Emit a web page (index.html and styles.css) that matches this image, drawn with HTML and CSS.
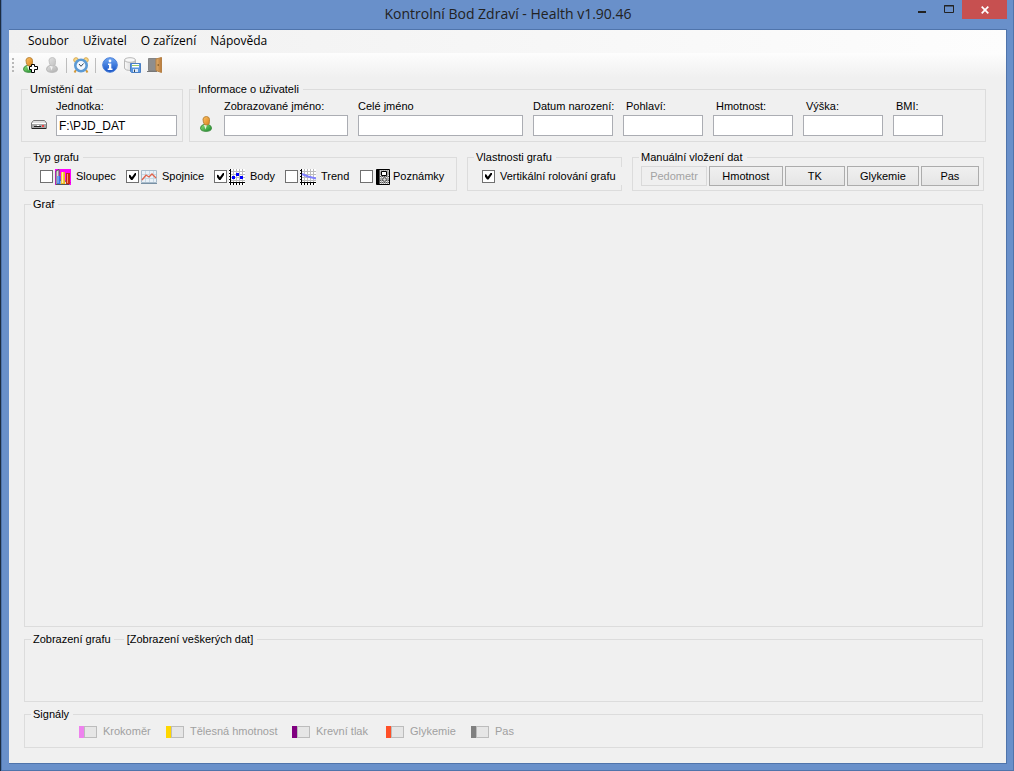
FILE: index.html
```
<!DOCTYPE html>
<html lang="cs">
<head>
<meta charset="utf-8">
<title>Kontrolní Bod Zdraví - Health v1.90.46</title>
<link rel="stylesheet" href="styles.css">
</head>
<body>
<svg class="defs" width="0" height="0" aria-hidden="true">
  <defs>
    <linearGradient id="gold" x1="0" y1="0" x2="1" y2="1"><stop offset="0" stop-color="#ffc060"/><stop offset="1" stop-color="#d88420"/></linearGradient>
    <linearGradient id="green" x1="0" y1="0" x2="1" y2="1"><stop offset="0" stop-color="#8fe07a"/><stop offset="1" stop-color="#178a2c"/></linearGradient>
    <linearGradient id="blue" x1="0" y1="0" x2="0" y2="1"><stop offset="0" stop-color="#6fa8f5"/><stop offset="1" stop-color="#1450c4"/></linearGradient>
    <linearGradient id="steel" x1="0" y1="0" x2="1" y2="0"><stop offset="0" stop-color="#fafafa"/><stop offset="1" stop-color="#c8c8c8"/></linearGradient>
    <linearGradient id="wood" x1="0" y1="0" x2="1" y2="0"><stop offset="0" stop-color="#e0b070"/><stop offset="1" stop-color="#b87838"/></linearGradient>
    <symbol id="person" viewBox="0 0 16 16">
      <path d="M2.500 12.500Q2.500 9.500 5.500 8.500H10.500Q13.500 9.500 13.500 12.500Q13 15.300 8 15.300Q3 15.300 2.500 12.500Z" fill="url(#green)" stroke="#3c8a3c"/>
      <path d="M6 9L7.500 13.500L9 9Z" fill="#e8f4e0"/>
      <path d="M5 3Q5.500 .5 8.500 .5Q11.500 .8 11.500 3.500Q11.500 6 11 8Q9 9.800 6.500 8.500Q5 6 5 3Z" fill="url(#gold)" stroke="#b9853a"/>
    </symbol>
    <symbol id="grid" viewBox="0 0 16 16">
      <path d="M0 0H16V16H0Z" fill="#fff"/>
      <path d="M4.500 0V14M7.500 0V14M10.500 0V14M13.500 0V14M2 2.500H16M2 5.500H16M2 8.500H16M2 11.500H16" stroke="#bcbcbc"/>
      <path d="M1.500 0V16M0 13.500H16M0 1.500H1M0 4.500H1M0 7.500H1M0 10.500H1M4.500 14V16M7.500 14V16M10.500 14V16M13.500 14V16" stroke="#000"/>
    </symbol>
  </defs>
</svg>
<div class="window">
  <header class="titlebar">
    <h1 class="title">Kontrolní Bod Zdraví - Health v1.90.46</h1>
    <div class="controls">
      <button class="ctl" type="button" aria-label="Minimalizovat"><svg width="8" height="14"><path d="M0 11H8V13H0Z" fill="#222"/></svg></button>
      <button class="ctl" type="button" aria-label="Maximalizovat"><svg width="10" height="14"><path d="M.5 5.500H9.500V12.500H.5ZM0 6H10" fill="none" stroke="#222"/></svg></button>
      <button class="ctl close" type="button" aria-label="Zavřít"><svg width="8" height="8"><path d="M.7 .7L7.300 7.300M7.300 .7L.7 7.300" stroke="#fff" stroke-width="1.700"/></svg></button>
    </div>
  </header>
  <div class="client">
    <nav class="menu">
      <button type="button">Soubor</button><button type="button">Uživatel</button><button type="button">O zařízení</button><button type="button">Nápověda</button>
    </nav>
    <div class="toolbar" role="toolbar">
      <span class="grip"></span>
      <button type="button" aria-label="Přidat uživatele"><svg width="16" height="16"><svg x="-1" width="16" height="16"><use href="#person"/></svg><path d="M9.500 7.500H12.500V9.500H15.500V12.500H12.500V15.500H9.500V12.500H7.500V9.500H9.500Z" fill="#fff" stroke="#000"/></svg></button>
      <button type="button" aria-label="Uživatel" disabled><svg class="gray" width="16" height="16"><use href="#person"/></svg></button>
      <span class="sep"></span>
      <button type="button" aria-label="Budík"><svg width="16" height="16"><path d="M3 13L1.500 15.500M13 13L14.500 15.500" stroke="#d49a3a" stroke-width="2"/><circle cx="3" cy="3" r="2.300" fill="#f8d88a" stroke="#d9aa50"/><circle cx="13" cy="3" r="2.300" fill="#f8d88a" stroke="#d9aa50"/><circle cx="8" cy="8.500" r="5.700" fill="#f4f9ff" stroke="#5c9ad4" stroke-width="2.600"/><path d="M6 7L8 9.300L10.500 6.500" fill="none" stroke="#345"/></svg></button>
      <span class="sep"></span>
      <button type="button" aria-label="Informace"><svg width="16" height="16"><circle cx="8" cy="8" r="7.300" fill="url(#blue)" stroke="#4a7fd8"/><circle cx="8" cy="4" r="1.400" fill="#fff"/><path d="M6 6.500H9.300V11.500H10.500V13H5.700V11.500H7V8H6Z" fill="#fff"/></svg></button>
      <button type="button" aria-label="Uložit data"><svg width="17" height="16"><path d="M.5 3V11Q1 13.500 7 13.500H11.500V3" fill="url(#steel)" stroke="#b8b8b8"/><ellipse cx="6" cy="3" rx="5.500" ry="2.300" fill="#f8f8f8" stroke="#b8b8b8"/><path d="M6.500 6.500H16.500V15.500H7.500L6.500 14.500Z" fill="#5a96e0" stroke="#4a7fc4"/><path d="M8 7H15V10.500H8Z" fill="#fff"/><path d="M8 8.500H15" stroke="#9bc96a"/><path d="M9 12H14V15H9Z" fill="#dce8f8"/><path d="M10 12.500H11V15H10Z" fill="#345"/></svg></button>
      <button type="button" aria-label="Konec"><svg width="16" height="16"><path d="M1.500 1.500H9.500V13.500H1.500Z" fill="#8e8e8e" stroke="#858585"/><path d="M0 14.500H10" stroke="#777"/><path d="M9 2L14.500 .5V15.500L9 13.500Z" fill="url(#wood)" stroke="#b58045"/><path d="M10.500 8H12" stroke="#604010"/></svg></button>
    </div>
    <main class="body">
      <div class="row top">
        <fieldset class="group location">
          <legend>Umístění dat</legend>
          <svg class="icon" width="16" height="16"><path d="M2.500 4.500H13.500L15.500 7V12.500H.5V7Z" fill="#e0e0e0" stroke="#777"/><path d="M1 7H15V12H1Z" fill="#a8a8a8"/><path d="M1 7.500H15" stroke="#fff"/><path d="M3 10H10V11H3Z" fill="#222"/><path d="M6 9H8V10H6Z" fill="#fff"/><path d="M11 9H13V11H11Z" fill="#e44"/><path d="M1 12.500H15" stroke="#222"/></svg>
          <div class="field unit"><label for="unit">Jednotka:</label><input id="unit" type="text" value="F:\PJD_DAT"></div>
        </fieldset>
        <fieldset class="group user">
          <legend>Informace o uživateli</legend>
          <svg class="icon" width="16" height="16"><use href="#person"/></svg>
          <div class="field nick"><label for="nick">Zobrazované jméno:</label><input id="nick" type="text"></div>
          <div class="field name"><label for="name">Celé jméno</label><input id="name" type="text"></div>
          <div class="field"><label for="birth">Datum narození:</label><input id="birth" type="text"></div>
          <div class="field inset"><label for="sex">Pohlaví:</label><input id="sex" type="text"></div>
          <div class="field inset"><label for="weight">Hmotnost:</label><input id="weight" type="text"></div>
          <div class="field inset"><label for="height">Výška:</label><input id="height" type="text"></div>
          <div class="field inset bmi"><label for="bmi">BMI:</label><input id="bmi" type="text"></div>
        </fieldset>
      </div>
      <div class="row options">
        <fieldset class="group types">
          <legend>Typ grafu</legend>
          <label class="check"><input type="checkbox"><svg width="16" height="16"><path d="M0 0H16V16H0Z" fill="#f0f"/><path d="M1 2L4 .5V11L15 13L14 15.500H1Z" fill="#ddd" stroke="#555"/><path d="M2 7H5.500V15H2Z" fill="#3a76e0"/><path d="M3 7V14" stroke="#a8c8ff"/><path d="M6 3H10V15H6Z" fill="#f0b820"/><path d="M7.500 3V14" stroke="#fff0a0" stroke-width="1.500"/><path d="M11 4H15V15H11Z" fill="#c82818"/><path d="M12.500 5V14" stroke="#ff9070"/></svg><span>Sloupec</span></label>
          <label class="check"><input type="checkbox" checked><svg width="16" height="16"><path d="M.5 1.500H15.500V13.500H.5Z" fill="#e9f1f8" stroke="#a9bccb"/><path d="M4.500 2V13M8.500 2V13M12.500 2V13M1 5.500H15M1 9.500H15" stroke="#c8d8e4"/><path d="M0 14.500H16" stroke="#7890a4"/><path d="M1 11L5 6L8 8L11 5L15 9" fill="none" stroke="#e0634a" stroke-width="1.300"/></svg><span>Spojnice</span></label>
          <label class="check"><input type="checkbox" checked><svg width="16" height="16"><use href="#grid"/><path d="M3 7H6V10H3ZM7 4H10V7H7ZM11 7H14V10H11Z" fill="#00f"/></svg><span>Body</span></label>
          <label class="check"><input type="checkbox"><svg width="16" height="16"><use href="#grid"/><path d="M2 5L8 7.500L16 9.500" fill="none" stroke="#8080ff" stroke-width="2"/></svg><span>Trend</span></label>
          <label class="check notes"><input type="checkbox"><svg width="16" height="16"><path d="M1.500 .5H14.500V15.500H1.500Z" fill="#aaa" stroke="#000"/><path d="M3 1V15" stroke="#000" stroke-width="3"/><path d="M5 2H14M5 6.500H14M5 8.500H14M5 12.500H14M5 14.500H14" stroke="#eee" stroke-dasharray="1 1"/><path d="M5 7.500H14M5 11.500H14M5 13.500H14" stroke="#555" stroke-dasharray="1 1"/><path d="M6.500 2.500H11.500V6.500H6.500Z" fill="#fff" stroke="#000"/><circle cx="9.500" cy="10.500" r="1.800" fill="#ddd" stroke="#555"/></svg><span>Poznámky</span></label>
        </fieldset>
        <fieldset class="group props">
          <legend>Vlastnosti grafu</legend>
          <label class="check"><input type="checkbox" checked><span>Vertikální rolování grafu</span></label>
        </fieldset>
        <fieldset class="group manual">
          <legend>Manuální vložení dat</legend>
          <button class="btn b-ped" type="button" disabled>Pedometr</button>
          <button class="btn b-wgt" type="button">Hmotnost</button>
          <button class="btn b-tk" type="button">TK</button>
          <button class="btn b-gly" type="button">Glykemie</button>
          <button class="btn b-pas" type="button">Pas</button>
        </fieldset>
      </div>
      <fieldset class="group chart"><legend>Graf</legend></fieldset>
      <fieldset class="group range"><legend><span>Zobrazení grafu</span><i class="dash"></i><span>[Zobrazení veškerých dat]</span></legend></fieldset>
      <fieldset class="group signals">
        <legend>Signály</legend>
        <label class="signal violet"><input type="checkbox" disabled><span>Krokoměr</span></label>
        <label class="signal yellow"><input type="checkbox" disabled><span>Tělesná hmotnost</span></label>
        <label class="signal purple"><input type="checkbox" disabled><span>Krevní tlak</span></label>
        <label class="signal orange"><input type="checkbox" disabled><span>Glykemie</span></label>
        <label class="signal slate"><input type="checkbox" disabled><span>Pas</span></label>
      </fieldset>
    </main>
  </div>
</div>
</body>
</html>
```
FILE: styles.css
```
* { box-sizing: border-box; }
body {
  margin: 0;
  background: #1c2c40;
  font: 11px/13px "Liberation Sans", Arial, sans-serif;
  color: #000;
}
.defs { position: absolute; }
svg { display: block; flex: none; }
button, input { font: inherit; color: inherit; margin: 0; }

.window {
  display: flex;
  flex-direction: column;
  min-height: 100vh;
  margin-left: 1px;
  padding: 0 6px 6px 7px;
  background: #6990ca;
  border: solid #4f74ab;
  border-width: 0 1px 1px;
}
.titlebar {
  display: grid;
  grid-template-columns: 1fr auto 1fr;
  height: 29px;
}
.title {
  grid-column: 2;
  margin: 0;
  font: 14px/28px "Open Sans", "Noto Sans", sans-serif;
  color: #222;
}
.controls { display: flex; justify-content: flex-end; }
.ctl {
  display: flex;
  justify-content: center;
  width: 27px;
  height: 19px;
  padding: 0;
  border: 0;
  background: none;
}
.ctl.close { width: 45px; align-items: center; background: #c75050; }

.client {
  flex: 1;
  display: flex;
  flex-direction: column;
  border: 1px solid #4f74ab;
  border-left-width: 0;
  background: #f0f0f0;
}
.menu {
  display: flex;
  align-items: flex-start;
  gap: 14px;
  height: 23px;
  padding-left: 19px;
  background: linear-gradient(90deg, #f0f0f0, #fdfdfd);
}
.menu button {
  padding: 0;
  border: 0;
  background: none;
  font: 12px/22px "Open Sans", "Noto Sans", sans-serif;
}
.toolbar {
  display: flex;
  align-items: flex-start;
  gap: 6px;
  height: 25px;
  padding: 4px 0 0 3px;
  background: linear-gradient(#fdfdfd, #f0f0f0);
}
.toolbar button { padding: 0; border: 0; background: none; }
.toolbar .gray { filter: grayscale(1) opacity(.5); }
.grip { width: 2px; height: 14px; margin: 1px 2px 0 0; background: repeating-linear-gradient(#b8b8b8 0 2px, transparent 2px 4px); }
.sep { width: 1px; height: 15px; margin-top: 1px; background: #bdbdbd; }

.body {
  flex: 1;
  display: flex;
  flex-direction: column;
  padding: 5px 23px 15px 15px;
}
.row { display: flex; }
.row.top { gap: 6px; margin: 0 -3px 9px; }
.row.options { gap: 10px; margin: 0 -1px 7px 0; }
.group {
  display: flex;
  min-width: 0;
  margin: 0;
  padding: 0 0 0 6px;
  border: 1px solid #dcdcdc;
}
.group legend { padding: 0 4px 0 2px; }
.location { width: 162px; padding: 4px 5px 5px 9px; gap: 9px; }
.user { flex: 1; padding: 4px 10px 5px 8px; gap: 10px; }
.location legend { margin-left: -3px; }
.user legend { margin-left: -2px; }
.icon { margin-top: 16px; }
.field { display: flex; flex-direction: column; gap: 2px; width: 80px; }
.field label { white-space: nowrap; }
.inset label { padding-left: 3px; }
.field input {
  width: 100%;
  height: 21px;
  padding: 0 2px;
  border: 1px solid #abadb3;
  background: #fff;
  font-size: 12px;
}
.unit { flex: 1; }
.nick { width: 124px; }
.name { width: 165px; }
.bmi { width: 50px; }

.check { display: flex; align-items: center; white-space: nowrap; }
.check svg { margin-left: 2px; }
.check span { margin-left: 5px; }
.notes span { margin-left: 2px; }
.check input, .signal input {
  appearance: none;
  display: flex;
  flex: none;
  width: 13px;
  height: 13px;
  border: 1px solid #707070;
  background: #fff;
}
.check input:checked::before {
  content: "";
  flex: 1;
  margin: 2px;
  background: #000;
  clip-path: polygon(0 25%, 20% 30%, 40% 60%, 85% 0, 100% 0, 100% 30%, 50% 100%, 30% 100%, 0 60%);
}
.types {
  display: grid;
  grid-template-columns: 86px 88px 71px 75px 1fr;
  flex: 433 1 433px;
  height: 40px;
  padding: 0 0 1px 15px;
}
.types legend { margin-left: -9px; }
.props { flex: 155 1 155px; padding: 0 0 1px 14px; }
.props legend { margin-left: -8px; }
.props .check { flex: 1; margin: 3px -1px 4px 0; background: #f0f0f0; }
.manual { flex: 352 1 352px; padding: 2px 4px 4px 8px; gap: 2px; }
.manual legend { margin-left: -2px; }
.btn {
  height: 20px;
  padding: 0;
  border: 1px solid #acacac;
  background: linear-gradient(#f0f0f0, #e5e5e5);
}
.btn:disabled { border-color: #d9d9d9; background: #efefef; color: #a3a3a3; }
.b-ped { flex: 66; }
.b-wgt { flex: 74; }
.b-tk { flex: 60; }
.b-gly { flex: 72; }
.b-pas { flex: 58; }

.chart { flex: 1; margin-bottom: 6px; }
.range { height: 69px; margin-bottom: 6px; }
.range legend { display: flex; align-items: center; }
.dash { width: 10px; height: 1px; margin: 0 3px; background: #dcdcdc; }
.signals {
  display: grid;
  grid-template-columns: 87px 126px 94px 85px 1fr;
  height: 40px;
  padding: 4px 0 3px 54px;
}
.signals legend { margin-left: -48px; }
.signal { display: flex; align-items: center; color: #a0a0a0; white-space: nowrap; }
.signal::before { content: ""; width: 5px; height: 12px; background: currentColor; }
.signal input { height: 12px; border-color: #bcbcbc; background: #e6e6e6; }
.signal span { margin-left: 6px; }
.violet::before { background: #ee82ee; }
.yellow::before { background: #ffd700; }
.purple::before { background: #800080; }
.orange::before { background: #ff5028; }
.slate::before { background: #808080; }
```
